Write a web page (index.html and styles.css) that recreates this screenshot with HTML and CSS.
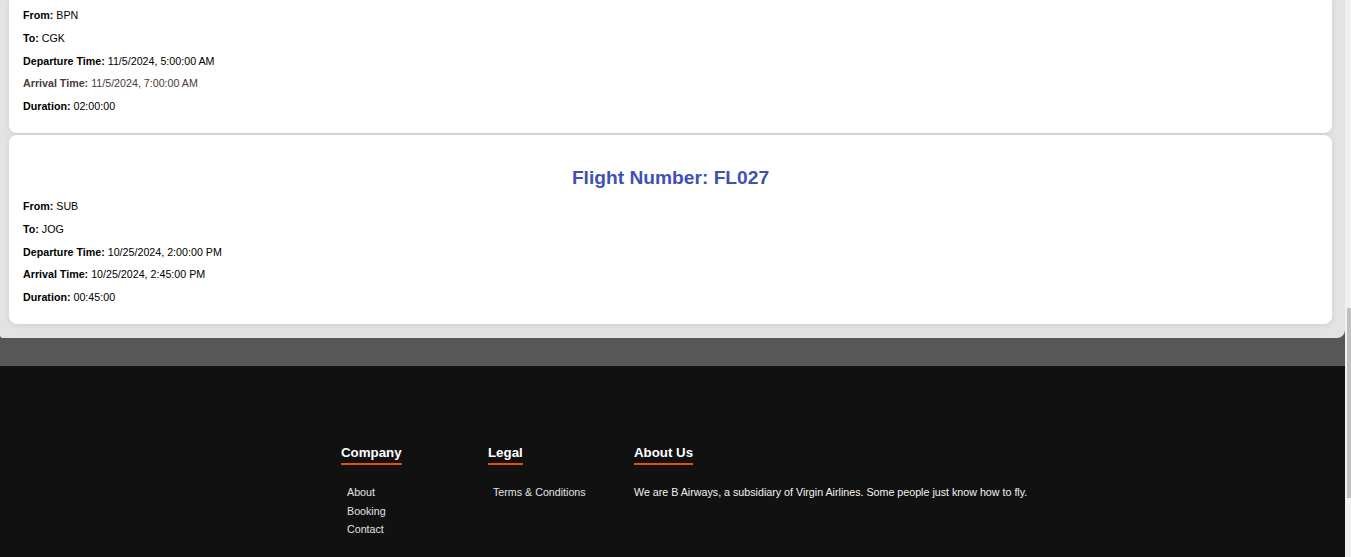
FILE: index.html
```html
<!DOCTYPE html>
<html lang="en">
<head>
<meta charset="utf-8">
<title>Flights</title>
<link rel="stylesheet" href="styles.css">
</head>
<body>
<div class="page">
  <main class="flights">
    <section class="card card-continued">
      <div class="details">
        <p><b>From:</b> BPN</p>
        <p><b>To:</b> CGK</p>
        <p><b>Departure Time:</b> 11/5/2024, 5:00:00 AM</p>
        <p class="hovered"><b>Arrival Time:</b> 11/5/2024, 7:00:00 AM</p>
        <p><b>Duration:</b> 02:00:00</p>
      </div>
    </section>
    <section class="card">
      <h2 class="card-title">Flight Number: FL027</h2>
      <div class="details">
        <p><b>From:</b> SUB</p>
        <p><b>To:</b> JOG</p>
        <p><b>Departure Time:</b> 10/25/2024, 2:00:00 PM</p>
        <p><b>Arrival Time:</b> 10/25/2024, 2:45:00 PM</p>
        <p><b>Duration:</b> 00:45:00</p>
      </div>
    </section>
  </main>
  <div class="band"></div>
  <footer class="footer">
    <div class="footer-inner">
      <div class="col col-company">
        <h3 class="col-title">Company</h3>
        <ul class="links">
          <li>About</li>
          <li>Booking</li>
          <li>Contact</li>
        </ul>
      </div>
      <div class="col col-legal">
        <h3 class="col-title">Legal</h3>
        <ul class="links">
          <li>Terms &amp; Conditions</li>
        </ul>
      </div>
      <div class="col col-about">
        <h3 class="col-title">About Us</h3>
        <p class="about-text">We are B Airways, a subsidiary of Virgin Airlines. Some people just know how to fly.</p>
      </div>
    </div>
  </footer>
</div>
<div class="scrollbar"><div class="thumb"></div></div>
</body>
</html>
```

FILE: styles.css
```css
html, body {
  margin: 0;
  padding: 0;
  height: 557px;
  overflow: hidden;
}
body {
  display: flex;
  font-family: "Liberation Sans", Arial, sans-serif;
  background: #575757;
}
.page {
  flex: 1;
  height: 557px;
  display: flex;
  flex-direction: column;
  justify-content: flex-end;
  overflow: hidden;
  background: #575757;
}
.flights {
  flex: none;
  display: flex;
  flex-direction: column;
  gap: 2px;
  padding: 0 13px 14px 9px;
  background: #e3e3e3;
  border-radius: 0 0 8px 3px;
}
.card {
  background: #fff;
  border-radius: 8px;
  box-shadow: 0 1px 6px rgba(0, 0, 0, 0.09);
  padding: 10px 14px 21px;
}
.card-continued {
  border-radius: 0 0 8px 8px;
  padding-top: 10px;
}
.card-title {
  margin: 22px 0 11px;
  text-align: center;
  font-size: 19.2px;
  line-height: 22px;
  font-weight: bold;
  color: #3f51b5;
}
.details {
  display: flex;
  flex-direction: column;
  gap: 10.75px;
}
.details p {
  margin: 0;
  font-size: 10.7px;
  line-height: 12px;
  color: #000;
}
.details p.hovered {
  color: #4a3a3a;
}
.band {
  flex: none;
  height: 28px;
}
.footer {
  flex: none;
  height: 191px;
  box-sizing: border-box;
  background: #111;
  padding-top: 77px;
}
.footer-inner {
  display: flex;
  padding-left: 341px;
}
.col-company { width: 147px; }
.col-legal { width: 146px; }
.col-about { flex: 1; }
.col-title {
  display: inline-block;
  margin: 0;
  font-size: 13.3px;
  line-height: 16px;
  font-weight: bold;
  color: #fff;
  padding-bottom: 2px;
  border-bottom: 2px solid #e65100;
}
.links {
  list-style: none;
  margin: 18px 0 0;
  padding: 0 0 0 6px;
}
.links li {
  font-size: 10.7px;
  line-height: 18.5px;
  color: #e2e2e2;
}
.col-legal .links { padding-left: 5px; }
.about-text {
  margin: 18px 0 0;
  font-size: 10.7px;
  line-height: 18.5px;
  color: #f4f4f4;
}
.scrollbar {
  flex: none;
  width: 6px;
  height: 557px;
  background: #f0f0f0;
  padding-top: 308px;
  box-sizing: border-box;
}
.thumb {
  width: 4px;
  margin-left: 2px;
  height: 190px;
  background: #c1c1c1;
}
```
